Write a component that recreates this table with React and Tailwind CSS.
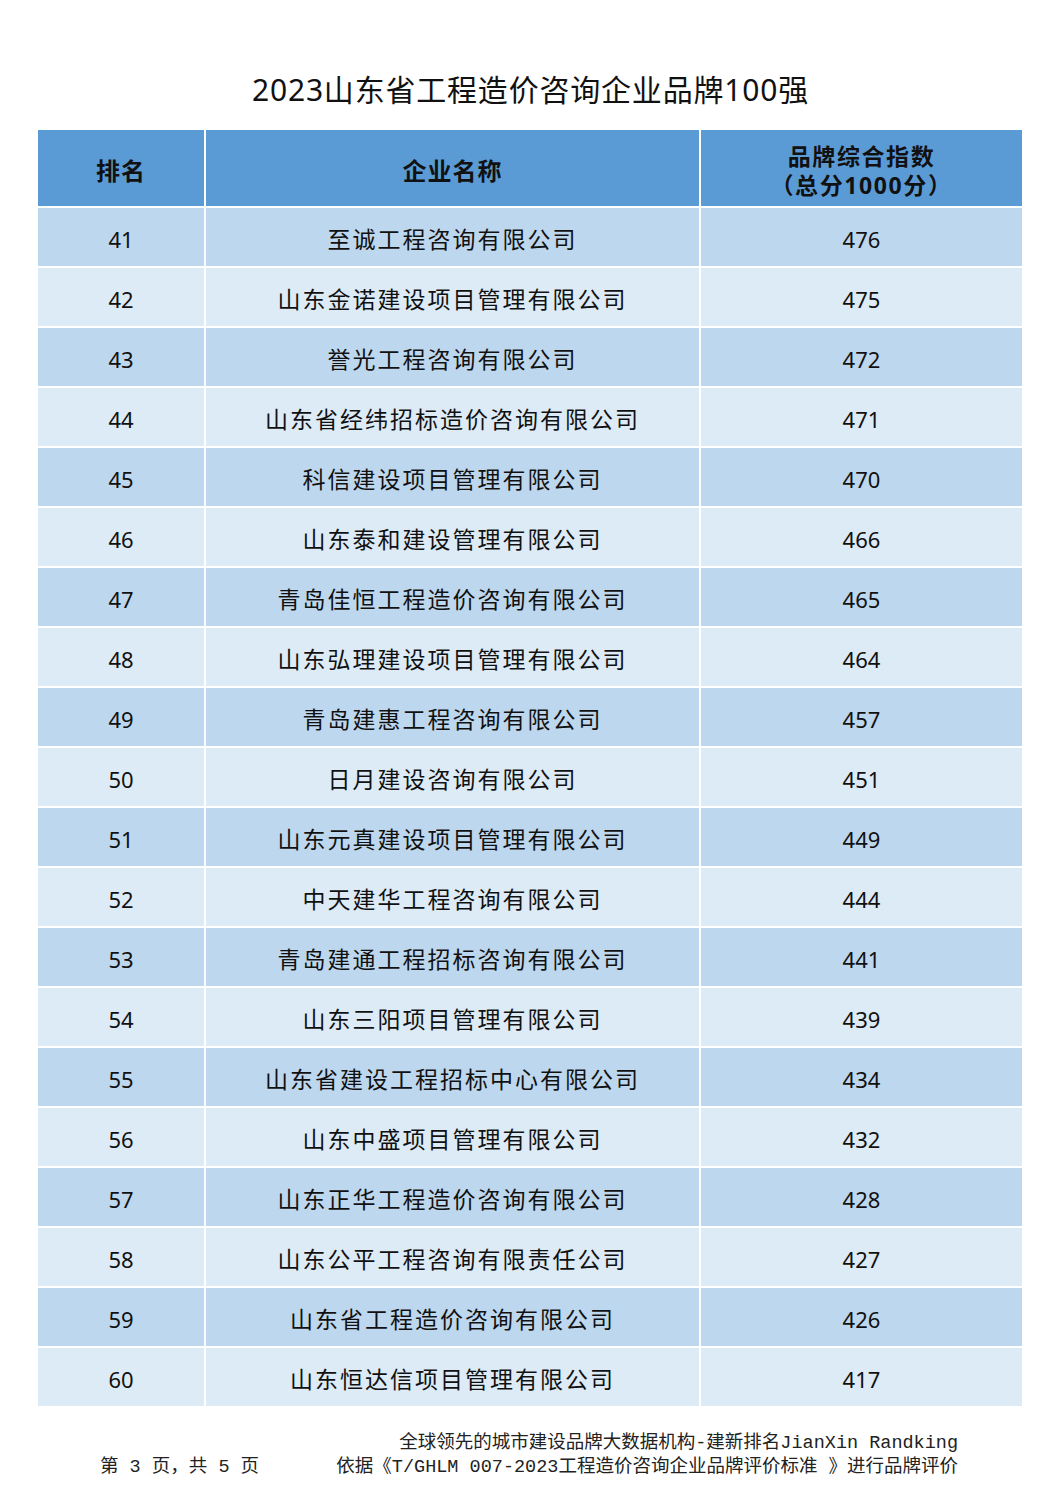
import React from 'react';

const rows = [
  [41, '至诚工程咨询有限公司', 476],
  [42, '山东金诺建设项目管理有限公司', 475],
  [43, '誉光工程咨询有限公司', 472],
  [44, '山东省经纬招标造价咨询有限公司', 471],
  [45, '科信建设项目管理有限公司', 470],
  [46, '山东泰和建设管理有限公司', 466],
  [47, '青岛佳恒工程造价咨询有限公司', 465],
  [48, '山东弘理建设项目管理有限公司', 464],
  [49, '青岛建惠工程咨询有限公司', 457],
  [50, '日月建设咨询有限公司', 451],
  [51, '山东元真建设项目管理有限公司', 449],
  [52, '中天建华工程咨询有限公司', 444],
  [53, '青岛建通工程招标咨询有限公司', 441],
  [54, '山东三阳项目管理有限公司', 439],
  [55, '山东省建设工程招标中心有限公司', 434],
  [56, '山东中盛项目管理有限公司', 432],
  [57, '山东正华工程造价咨询有限公司', 428],
  [58, '山东公平工程咨询有限责任公司', 427],
  [59, '山东省工程造价咨询有限公司', 426],
  [60, '山东恒达信项目管理有限公司', 417],
];

const sans = "font-['Noto_Sans','Noto_Sans_CJK_SC',sans-serif]";

const App = () => {
  return (
    <div className={`w-[1061px] h-[1500px] bg-white text-[#111] ${sans}`}>
      <h1 className="pt-[70px] text-center text-[30px] leading-[40px] tracking-[0.8px]">
        2023山东省工程造价咨询企业品牌100强
      </h1>

      <div className="mt-[20px] ml-[38px] w-[984px] grid grid-cols-[166px_493px_321px] gap-[2px] bg-white">
        <div className="h-[76px] pt-[5px] bg-[#5b9bd5] flex items-center justify-center font-bold text-[24px] tracking-[1px]">排名</div>
        <div className="h-[76px] pt-[5px] bg-[#5b9bd5] flex items-center justify-center font-bold text-[24px] tracking-[1px]">企业名称</div>
        <div className="h-[76px] pt-[5px] bg-[#5b9bd5] flex flex-col items-center justify-center gap-[1px] font-bold text-[23px] leading-[28px] tracking-[1.6px]">
          <span>品牌综合指数</span>
          <span>（总分1000分）</span>
        </div>

        {rows.map(([rank, name, score], idx) => {
          const bg = idx % 2 === 0 ? 'bg-[#bdd7ee]' : 'bg-[#ddebf7]';
          return (
            <React.Fragment key={rank}>
              <div className={`h-[58px] pt-[4px] ${bg} flex items-center justify-center text-[22px]`}>{rank}</div>
              <div className={`h-[58px] pt-[4px] ${bg} flex items-center justify-center text-[23px] tracking-[2px]`}>{name}</div>
              <div className={`h-[58px] pt-[4px] ${bg} flex items-center justify-center text-[22px]`}>{score}</div>
            </React.Fragment>
          );
        })}
      </div>

      <div className="mt-[26px] flex items-end font-['Liberation_Mono','Noto_Sans_CJK_SC',monospace] text-[18.5px] leading-[24px] text-[#222]">
        <div className="ml-[100px] w-[230px] whitespace-pre">第 3 页，共 5 页</div>
        <div className="w-[628px] flex flex-col items-end">
          <span>全球领先的城市建设品牌大数据机构-建新排名JianXin Randking</span>
          <span>依据《T/GHLM 007-2023工程造价咨询企业品牌评价标准 》进行品牌评价</span>
        </div>
      </div>
    </div>
  );
};

export default App;
